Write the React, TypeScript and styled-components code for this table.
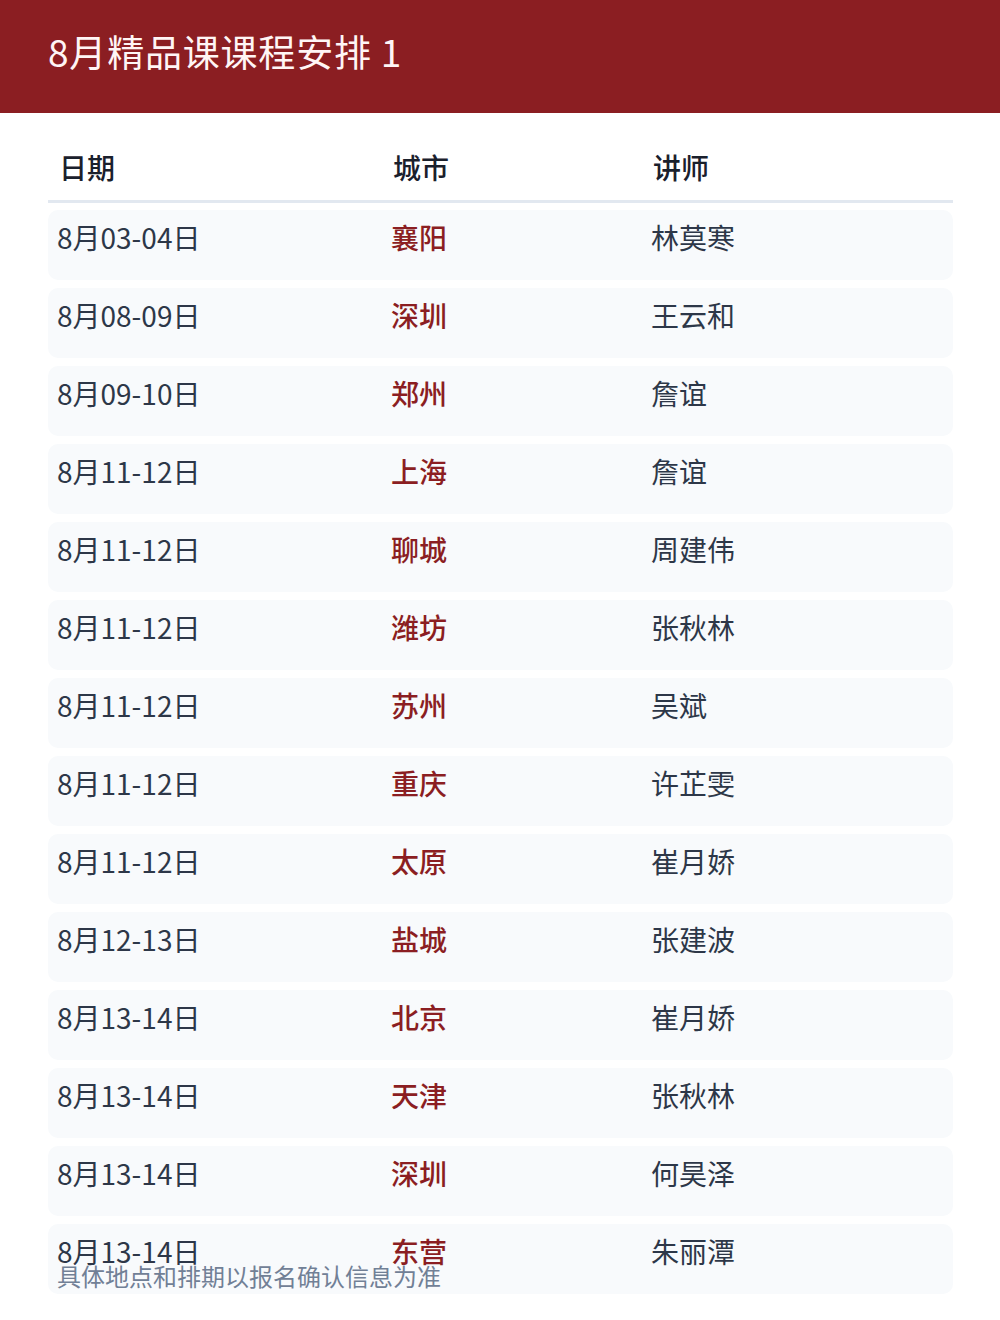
import React from 'react';
import styled, { createGlobalStyle } from 'styled-components';

const GlobalStyle = createGlobalStyle`
  body {
    margin: 0;
    background: #FFFFFF;
    font-family: "Noto Sans CJK SC", "Noto Sans", sans-serif;
  }
`;

const Page = styled.div`
  position: relative;
  width: 1000px;
  height: 1320px;
  overflow: hidden;
  background: #FFFFFF;
`;

const Banner = styled.div`
  box-sizing: border-box;
  height: 113px;
  padding: 27px 48px 0;
  background-color: #8B1E22;
  h1 {
    margin: 0;
    font-size: 37px;
    line-height: 48px;
    font-weight: 400;
    color: #FFF5F5;
    letter-spacing: 0.8px;
  }
`;

const Schedule = styled.div`
  display: flex;
  flex-direction: column;
  gap: 8px;
  margin: 26px 47px 0 48px;
`;

const Row = styled.div<{ head?: boolean }>`
  display: grid;
  grid-template-columns: 334px 260px 1fr;
  box-sizing: border-box;
  height: ${p => (p.head ? '64px' : '70px')};
  padding: ${p => (p.head ? '10px 0 15px' : '9px 0 25px')};
  background: ${p => (p.head ? 'transparent' : '#F8FAFC')};
  border-radius: ${p => (p.head ? '0' : '10px')};
  border-bottom: ${p => (p.head ? '3px solid #E2E8F0' : 'none')};
  margin-bottom: ${p => (p.head ? '-1px' : '0')};
`;

const Cell = styled.div<{ kind?: 'head' | 'city' | 'plain' }>`
  padding-left: ${p => (p.kind === 'head' ? '11px' : '9px')};
  font-size: 28px;
  line-height: 36px;
  white-space: nowrap;
  font-weight: ${p => (p.kind === 'head' || p.kind === 'city' ? 500 : 400)};
  color: ${p => (p.kind === 'city' ? '#8B1E22' : p.kind === 'head' ? '#1A202C' : '#2D3748')};
`;

const Note = styled.div`
  position: absolute;
  left: 57px;
  top: 1262px;
  font-size: 24px;
  line-height: 28px;
  color: #718096;
`;

const rows: [string, string, string][] = [
  ['8月03-04日', '襄阳', '林莫寒'],
  ['8月08-09日', '深圳', '王云和'],
  ['8月09-10日', '郑州', '詹谊'],
  ['8月11-12日', '上海', '詹谊'],
  ['8月11-12日', '聊城', '周建伟'],
  ['8月11-12日', '潍坊', '张秋林'],
  ['8月11-12日', '苏州', '吴斌'],
  ['8月11-12日', '重庆', '许芷雯'],
  ['8月11-12日', '太原', '崔月娇'],
  ['8月12-13日', '盐城', '张建波'],
  ['8月13-14日', '北京', '崔月娇'],
  ['8月13-14日', '天津', '张秋林'],
  ['8月13-14日', '深圳', '何昊泽'],
  ['8月13-14日', '东营', '朱丽潭'],
];

export default function App() {
  return (
    <Page>
      <GlobalStyle />
      <Banner>
        <h1>8月精品课课程安排 1</h1>
      </Banner>
      <Schedule>
        <Row head>
          <Cell kind="head">日期</Cell>
          <Cell kind="head">城市</Cell>
          <Cell kind="head">讲师</Cell>
        </Row>
        {rows.map(([date, city, teacher], i) => (
          <Row key={i}>
            <Cell kind="plain">{date}</Cell>
            <Cell kind="city">{city}</Cell>
            <Cell kind="plain">{teacher}</Cell>
          </Row>
        ))}
      </Schedule>
      <Note>具体地点和排期以报名确认信息为准</Note>
    </Page>
  );
}
